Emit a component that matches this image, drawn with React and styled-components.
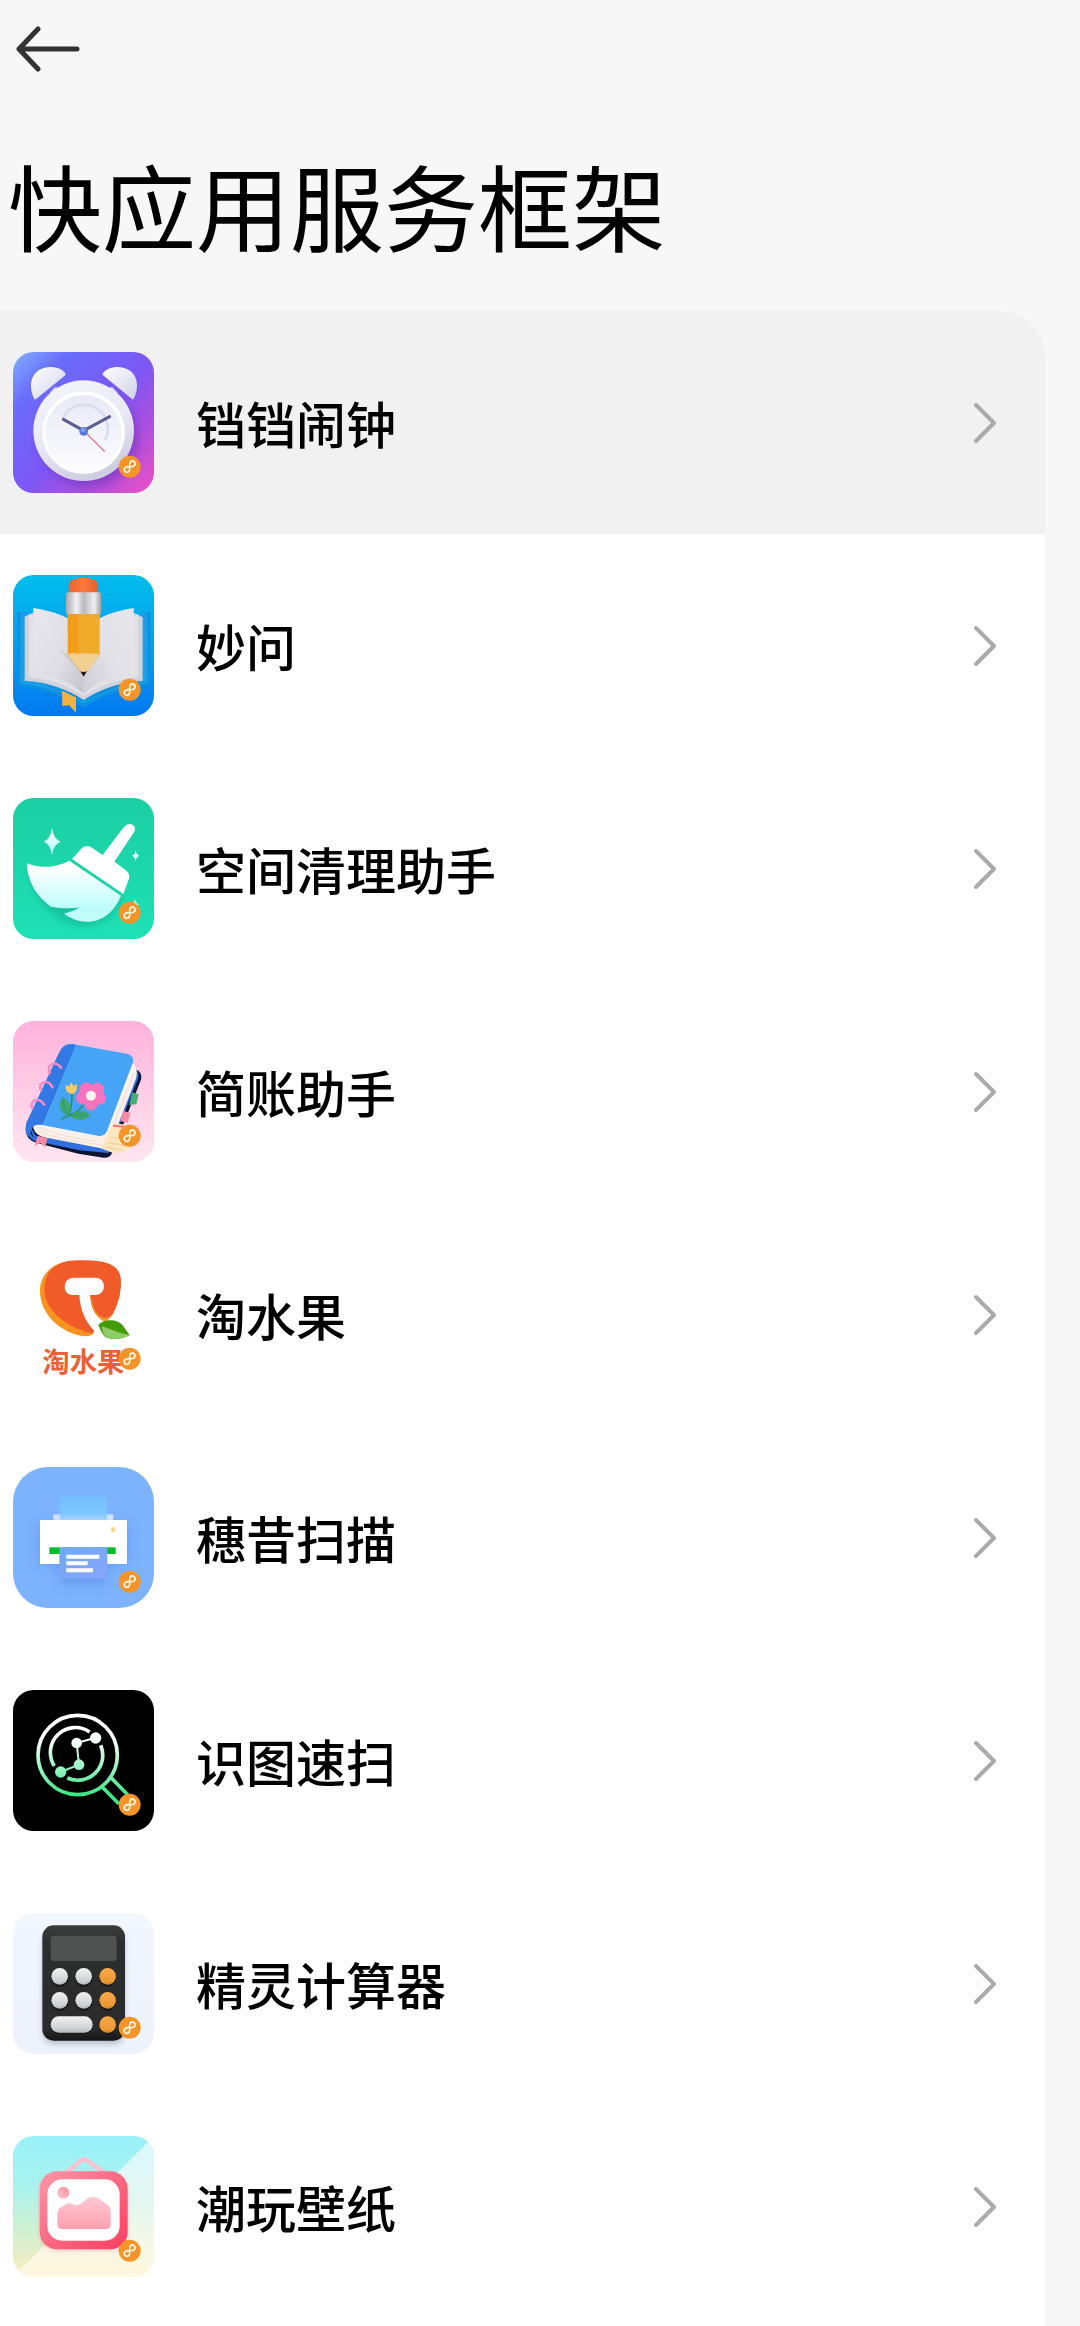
import React from 'react'
import styled, { createGlobalStyle } from 'styled-components';

const GlobalStyle = createGlobalStyle`
  * {
    box-sizing: border-box;
  }
  body {
    margin: 0;
    background: #f7f7f7;
    font-family: "Noto Sans CJK SC", "Noto Sans", sans-serif;
    color: #000;
  }
`

// small orange "quick app" mark in the corner of every icon
const LinkBadge = () => (
    <g transform="translate(350 344)">
        <circle r="33" fill="#f59428" />
        <path
            transform="rotate(-47)"
            d="M0 0C4 -5 7 -8 12 -8A8 8 0 0 1 12 8C7 8 4 5 0 0C-4 -5 -7 -8 -12 -8A8 8 0 0 0 -12 8C-7 8 -4 5 0 0Z"
            fill="none"
            stroke="#fff7ea"
            strokeWidth="5"
        />
    </g>
)

const ClockIcon = () => (
    <>
        <defs>
            <linearGradient id="clock-bg" x1="0" y1="0" x2="1" y2="1">
                <stop offset="0" stopColor="#7fb0ff" />
                <stop offset="0.2" stopColor="#6a6dfb" />
                <stop offset="0.52" stopColor="#7c57f6" />
                <stop offset="0.75" stopColor="#b04fdc" />
                <stop offset="1" stopColor="#ee50c4" />
            </linearGradient>
            <linearGradient id="clock-rim" x1="0" y1="0" x2="0.4" y2="1">
                <stop offset="0" stopColor="#f6f6fd" />
                <stop offset="0.6" stopColor="#e9e9f5" />
                <stop offset="1" stopColor="#cfcfe3" />
            </linearGradient>
            <linearGradient id="clock-face" x1="0" y1="0" x2="0" y2="1">
                <stop offset="0" stopColor="#e8e9f6" />
                <stop offset="1" stopColor="#fdfdff" />
            </linearGradient>
            <linearGradient id="clock-bell" x1="0" y1="0" x2="1" y2="1">
                <stop offset="0" stopColor="#ffffff" />
                <stop offset="1" stopColor="#cfd2ea" />
            </linearGradient>
            <filter id="clock-shadow" x="-20%" y="-20%" width="150%" height="150%">
                <feGaussianBlur stdDeviation="14" />
            </filter>
        </defs>
        <rect width="423" height="423" rx="62" fill="url(#clock-bg)" />
        <g transform="translate(-40 -36)">
            <circle cx="266" cy="292" r="150" fill="#5a2fb8" opacity="0.45" filter="url(#clock-shadow)" />
            <path d="M150 158l16 -18l26 8l-30 26z" fill="#c9cce8" />
            <path d="M354 158l-16 -18l-26 8l30 26z" fill="#c9cce8" />
            <path d="M104 177C88 146 90 108 118 90C146 74 180 80 196 98Q200 103 195 107L112 175Q107 180 104 177Z" fill="url(#clock-bell)" />
            <path d="M402 177C418 146 416 108 388 90C360 74 326 80 311 98Q306 103 312 107L394 175Q399 180 402 177Z" fill="url(#clock-bell)" />
            <circle cx="252" cy="272" r="151" fill="url(#clock-rim)" />
            <circle cx="252" cy="278" r="124" fill="#fff" />
            <circle cx="252" cy="280" r="115" fill="url(#clock-face)" />
            <path d="M190 232A68 68 0 1 1 316 300" fill="none" stroke="#dcdeef" strokeWidth="9" />
            <path d="M252 272L191 238M252 272L330 230" stroke="#5a5e90" strokeWidth="9" strokeLinecap="round" />
            <path d="M256 276L314 334" stroke="#e2778b" strokeWidth="4" strokeLinecap="round" />
            <circle cx="252" cy="274" r="13" fill="#5779dc" />
            <circle cx="250" cy="270" r="6" fill="#86a6f5" />
        </g>
    </>
)

const BookIcon = () => (
    <>
        <defs>
            <linearGradient id="book-bg" x1="0" y1="0" x2="0" y2="1">
                <stop offset="0" stopColor="#00bdec" />
                <stop offset="0.6" stopColor="#0b97ee" />
                <stop offset="1" stopColor="#0078f0" />
            </linearGradient>
            <linearGradient id="book-metal" x1="0" y1="0" x2="1" y2="0">
                <stop offset="0" stopColor="#a9a9ad" />
                <stop offset="0.3" stopColor="#f2f2f4" />
                <stop offset="0.5" stopColor="#b9b9be" />
                <stop offset="0.8" stopColor="#f0f0f2" />
                <stop offset="1" stopColor="#9d9da3" />
            </linearGradient>
            <linearGradient id="book-page" x1="0" y1="0" x2="1" y2="1">
                <stop offset="0" stopColor="#e9e8ee" />
                <stop offset="0.6" stopColor="#dedde5" />
                <stop offset="1" stopColor="#c5c3cd" />
            </linearGradient>
            <linearGradient id="book-page-right" x1="0" y1="1" x2="1" y2="0">
                <stop offset="0" stopColor="#cfcdd6" />
                <stop offset="0.5" stopColor="#e3e2e8" />
                <stop offset="1" stopColor="#e6e6ea" />
            </linearGradient>
            <linearGradient id="book-eraser" x1="0" y1="0" x2="1" y2="0">
                <stop offset="0" stopColor="#f0602c" />
                <stop offset="0.5" stopColor="#fa7a42" />
                <stop offset="1" stopColor="#e9602c" />
            </linearGradient>
        </defs>
        <rect width="423" height="423" rx="62" fill="url(#book-bg)" />
        <g transform="translate(-40 -45)">
            <path d="M52 156H80V340L250 418L428 340V156H452V376C370 384 300 410 252 444C205 410 130 384 55 378Z" fill="#0c90e0" />
            <path d="M62 158H80V352L250 424L424 352V158H444V368C370 378 300 402 252 430C205 402 130 378 60 370Z" fill="#1c9ee6" />
            <path d="M187 392L229 412L229 458L209 436L188 438Z" fill="#f3b142" />
            <path d="M75 170L100 158L252 250L402 158L429 172L429 362C360 366 300 388 252 420C204 388 145 366 75 362Z" fill="#d3d2da" />
            <path d="M88 162L250 250L416 162L416 352C350 358 290 382 252 408C214 382 155 358 88 352Z" fill="#e2e1e8" />
            <path d="M101 144C160 152 220 176 252 206L252 402C215 366 160 344 101 338Z" fill="url(#book-page)" />
            <path d="M402 144C344 152 284 176 252 206L252 402C288 366 344 344 402 338Z" fill="url(#book-page-right)" />
            <path d="M205 284L252 348L180 270Z" fill="#a9a3ae" opacity="0.3" />
            <path d="M207 104L207 76C207 60 222 54 251 54C280 54 295 60 295 76L295 104Z" fill="url(#book-eraser)" />
            <rect x="199" y="97" width="106" height="66" rx="8" fill="url(#book-metal)" />
            <path d="M204 162H300V284L252 348L204 284Z" fill="#f0ab28" />
            <path d="M204 162H236V284H206Z" fill="#f29c1c" />
            <path d="M205 284Q218 274 236 282Q252 276 268 282Q286 276 299 284L252 348Z" fill="#f1cf8e" />
            <path d="M242 334Q252 338 262 334L252 350Z" fill="#221d1c" />
        </g>
    </>
)

const BroomIcon = () => (
    <>
        <defs>
            <linearGradient id="broom-bg" x1="0" y1="0" x2="0" y2="1">
                <stop offset="0" stopColor="#1bcea3" />
                <stop offset="1" stopColor="#1fe0b5" />
            </linearGradient>
            <linearGradient id="broom-brush" x1="0" y1="0" x2="0" y2="1">
                <stop offset="0.1" stopColor="#ffffff" />
                <stop offset="0.8" stopColor="#bcfdfa" />
                <stop offset="1" stopColor="#c5fdf9" />
            </linearGradient>
            <filter id="broom-shadow" x="-20%" y="-20%" width="140%" height="140%">
                <feGaussianBlur stdDeviation="9" />
            </filter>
        </defs>
        <rect width="423" height="423" rx="62" fill="url(#broom-bg)" />
        <g transform="translate(-40 -39)">
            <path d="M81 250C125 262 170 260 210 236L370 340C340 400 300 424 255 424C210 424 110 390 81 250Z" fill="#0f9f80" opacity="0.4" filter="url(#broom-shadow)" />
            <path d="M81 235C125 252 168 248 209 227L364 332C340 390 300 410 262 410C236 410 212 400 193 386Q220 380 241 367C215 372 190 370 153 365C108 332 84 290 81 235Z" fill="url(#broom-brush)" />
            <path d="M217 222L247 189Q261 177 277 188L309 210L372 127Q384 113 398 119Q411 126 403 142L344 230L377 254Q392 265 388 281L371 327Z" fill="#fff" />
            <path d="M157 130Q162 164 183 170Q162 177 157 210Q152 177 132 170Q152 164 157 130Z" fill="url(#broom-brush)" />
            <path d="M408 195Q410 210 419 212Q410 215 408 229Q406 215 397 212Q406 210 408 195Z" fill="#e3fff9" />
            <path d="M405 342Q408 356 419 360L401 362Z" fill="#e3fff9" />
        </g>
    </>
)

const NotebookIcon = () => (
    <>
        <defs>
            <linearGradient id="note-bg" x1="0" y1="0" x2="0" y2="1">
                <stop offset="0" stopColor="#ffb2dc" />
                <stop offset="1" stopColor="#ffe6f0" />
            </linearGradient>
        </defs>
        <rect width="423" height="423" rx="62" fill="url(#note-bg)" />
        <g transform="translate(-40 -36)">
            <path d="M395 178Q430 184 424 212L336 434Q330 447 312 446L236 434L112 402Q78 392 78 362L100 320Z" fill="#0c1633" />
            <path d="M396 174Q420 182 416 206L326 432L240 424L106 396Q70 380 82 334L92 344Q100 380 128 394Z" fill="#2f6fe0" />
            <path d="M92 350Q94 374 104 386L98 382Q88 370 92 350Z" fill="#0c1633" />
            <path d="M100 345L398 163Q416 176 410 206L328 418Q318 424 304 418L130 384Q98 374 100 345Z" fill="#fbf1ea" />
            <path d="M110 352Q180 384 300 398M116 368Q190 394 304 408M404 190L330 378" fill="none" stroke="#f2ddd5" strokeWidth="3" />
            <path d="M340 342L404 350L396 412Q372 438 334 430L304 418Z" fill="#fbe6bd" />
            <path d="M330 385L366 388M324 402L376 408M318 415L366 422" stroke="#f3cf94" strokeWidth="3" />
            <path d="M178 132Q190 102 218 105L382 134Q404 140 400 160L322 366Q314 384 294 380L128 348Q98 342 92 366L84 378Q72 360 84 334Z" fill="#45a4f5" />
            <path d="M178 132Q190 102 224 106L124 347Q98 342 92 370L84 382Q72 360 84 334Z" fill="#3478e6" />
            <path d="M226 107L126 346" stroke="#2f6cd8" strokeWidth="4" />
            <path d="M150 192C138 166 168 152 184 176M124 244C112 222 144 206 158 234M98 298C88 274 118 262 133 286" fill="none" stroke="#f58cc3" strokeWidth="8" strokeLinecap="round" />
            <path d="M398 250L417 256L410 286L388 288Z" fill="#46ad75" />
            <path d="M370 305L393 312L384 342L362 336Z" fill="#f58bab" />
            <path d="M340 350L376 353" stroke="#f0728c" strokeWidth="6" />
            <path d="M114 380L144 388L136 414L122 402L105 410Z" fill="#f789a5" />
            <path d="M217 245Q218 290 208 318L186 330M250 290Q232 312 208 320" fill="none" stroke="#2f8f63" strokeWidth="5" strokeLinecap="round" />
            <path d="M204 320C176 310 174 280 190 264C210 274 218 298 204 320Z" fill="#3fa673" />
            <path d="M212 322C230 302 256 304 272 316C260 338 232 338 212 322Z" fill="#3fa673" />
            <path d="M186 268L202 316M214 321L264 316" stroke="#2f8f63" strokeWidth="2" />
            <path d="M198 228L208 232L215 220L222 231L231 224C234 246 226 255 214 254C202 252 197 244 198 228Z" fill="#f7ca66" />
            <g fill="#f574bd">
                <circle cx="260" cy="240" r="20" />
                <circle cx="293" cy="241" r="20" />
                <circle cx="300" cy="268" r="19" />
                <circle cx="274" cy="284" r="20" />
                <circle cx="249" cy="266" r="20" />
            </g>
            <circle cx="274" cy="260" r="15" fill="#fff6ef" />
        </g>
    </>
)

const FruitIcon = () => (
    <>
        <rect width="423" height="423" rx="62" fill="#fff" />
        <g transform="translate(-40 -45)">
            <path d="M214 96C160 100 124 134 121 180C119 240 160 296 234 318Q262 326 280 316L290 290L200 120Z" fill="#f7941f" />
            <path d="M240 94C190 92 134 110 134 184C136 240 190 284 246 304Q270 316 282 310L300 262Q330 280 346 242C358 214 364 190 364 158C364 112 330 92 240 94Z" fill="#f15a29" />
            <path d="M270 200L275 206C280 240 296 266 318 268Q334 270 346 242Q334 276 310 278Q284 268 270 200Z" fill="#f7941f" />
            <path d="M222 146H288Q312 148 313 172Q312 194 290 198H271C273 232 284 262 312 277L298 296L290 312L284 306C256 276 242 244 239 198H216Q194 194 195 172Q196 148 222 146Z" fill="#fff" />
            <path d="M296 288C310 272 350 266 370 290Q380 304 390 318C370 330 330 336 314 322Q304 310 296 288Z" fill="#429d05" />
            <path d="M306 292C330 298 350 312 390 318C364 332 330 334 316 322Q308 310 306 292Z" fill="#8ccb66" />
        </g>
        <text x="88" y="384" fontSize="82" fontWeight="700" fill="#ee5f35" fontFamily='"Noto Sans CJK SC", sans-serif'>
            淘水果
        </text>
    </>
)

const PrinterIcon = () => (
    <>
        <defs>
            <linearGradient id="print-paper" x1="0" y1="0" x2="0" y2="1">
                <stop offset="0" stopColor="#72bfff" />
                <stop offset="0.7" stopColor="#7cc6ff" />
                <stop offset="1" stopColor="#a8d2fd" />
            </linearGradient>
            <linearGradient id="print-out" x1="0" y1="0" x2="1" y2="1">
                <stop offset="0" stopColor="#70a8f8" />
                <stop offset="1" stopColor="#86a6fa" />
            </linearGradient>
            <filter id="print-shadow" x="-20%" y="-30%" width="140%" height="170%">
                <feGaussianBlur stdDeviation="16" />
            </filter>
        </defs>
        <rect width="423" height="423" rx="104" fill="#7db2fd" />
        <g transform="translate(-40 -39)">
            <rect x="118" y="210" width="268" height="120" fill="#4a86e6" opacity="0.5" filter="url(#print-shadow)" />
            <rect x="180" y="300" width="142" height="90" fill="#4a86e6" opacity="0.5" filter="url(#print-shadow)" />
            <rect x="161" y="181" width="180" height="20" fill="#cfdffc" />
            <rect x="180" y="128" width="142" height="70" fill="url(#print-paper)" />
            <rect x="121" y="198" width="261" height="132" fill="#fff" />
            <rect x="149" y="280" width="199" height="20" fill="#06bd27" />
            <rect x="334" y="220" width="13" height="13" rx="4" fill="#f7d48c" />
            <rect x="179" y="280" width="144" height="95" fill="url(#print-out)" />
            <path d="M200 308H299M200 328H264M200 349H280" stroke="#fff" strokeWidth="12" />
        </g>
    </>
)

const ScanIcon = () => (
    <>
        <defs>
            <linearGradient id="scan-line" gradientUnits="userSpaceOnUse" x1="0" y1="105" x2="0" y2="350">
                <stop offset="0.3" stopColor="#ffffff" />
                <stop offset="0.65" stopColor="#9af5c4" />
                <stop offset="1" stopColor="#3de583" />
            </linearGradient>
        </defs>
        <rect width="423" height="423" rx="62" fill="#000" />
        <g transform="translate(-40 -34)" fill="none" stroke="url(#scan-line)">
            <circle cx="234" cy="229" r="119" strokeWidth="11" />
            <path d="M270 160A75 75 0 0 0 164 262M303 200A75 75 0 0 1 203 298" strokeWidth="11" />
            <path d="M183 280L238 258L231 193L288 177" strokeWidth="6" />
            <g fill="url(#scan-line)" stroke="none">
                <circle cx="288" cy="178" r="17" />
                <circle cx="231" cy="193" r="16" />
                <circle cx="238" cy="258" r="16" />
                <circle cx="183" cy="280" r="17" />
            </g>
            <path d="M307 324L358 376M335 298L384 348" strokeWidth="11" />
        </g>
    </>
)

const CalculatorIcon = () => (
    <>
        <defs>
            <linearGradient id="calc-bg" x1="0" y1="0" x2="0" y2="1">
                <stop offset="0" stopColor="#f1f7ff" />
                <stop offset="1" stopColor="#eef3fb" />
            </linearGradient>
            <linearGradient id="calc-body" x1="0" y1="0" x2="0" y2="1">
                <stop offset="0" stopColor="#3b3c3c" />
                <stop offset="0.15" stopColor="#2d2e2e" />
                <stop offset="0.9" stopColor="#2b2b2b" />
                <stop offset="1" stopColor="#151515" />
            </linearGradient>
            <linearGradient id="calc-key" x1="0" y1="0" x2="0" y2="1">
                <stop offset="0" stopColor="#f2f2f2" />
                <stop offset="0.7" stopColor="#d2d3d4" />
                <stop offset="1" stopColor="#b6b7b8" />
            </linearGradient>
            <linearGradient id="calc-op" x1="0" y1="0" x2="0" y2="1">
                <stop offset="0" stopColor="#f8ab49" />
                <stop offset="0.8" stopColor="#eb9735" />
                <stop offset="1" stopColor="#cf7f22" />
            </linearGradient>
            <filter id="calc-shadow" x="-20%" y="-20%" width="140%" height="140%">
                <feGaussianBlur stdDeviation="9" />
            </filter>
        </defs>
        <rect width="423" height="423" rx="62" fill="url(#calc-bg)" />
        <g transform="translate(-40 -45)">
            <rect x="130" y="100" width="244" height="338" rx="34" fill="#8b95a5" opacity="0.6" filter="url(#calc-shadow)" />
            <rect x="128" y="82" width="248" height="346" rx="34" fill="url(#calc-body)" />
            <rect x="153" y="113" width="198" height="76" rx="12" fill="#505151" />
            {[237, 309].map((y) => (
                <g key={y}>
                    <circle cx="180" cy={y + 3} r="27" fill="#1a1a1a" />
                    <circle cx="252" cy={y + 3} r="27" fill="#1a1a1a" />
                    <circle cx="180" cy={y - 2} r="25" fill="url(#calc-key)" />
                    <circle cx="252" cy={y - 2} r="25" fill="url(#calc-key)" />
                </g>
            ))}
            {[235, 307, 380].map((y) => (
                <g key={y}>
                    <circle cx="324" cy={y + 5} r="26" fill="#1a1a1a" />
                    <circle cx="324" cy={y} r="25" fill="url(#calc-op)" />
                </g>
            ))}
            <rect x="152" y="359" width="128" height="50" rx="25" fill="#1a1a1a" />
            <rect x="153" y="355" width="126" height="49" rx="24" fill="url(#calc-key)" />
        </g>
    </>
)

const WallpaperIcon = () => (
    <>
        <defs>
            <linearGradient id="wall-bg" x1="0" y1="0" x2="0" y2="1">
                <stop offset="0" stopColor="#98f2fa" />
                <stop offset="0.35" stopColor="#a9f2ee" />
                <stop offset="0.7" stopColor="#d3f0cf" />
                <stop offset="1" stopColor="#fdecc0" />
            </linearGradient>
            <linearGradient id="wall-light" x1="0" y1="0" x2="0" y2="1">
                <stop offset="0" stopColor="#daf8ff" />
                <stop offset="0.5" stopColor="#e4f7f0" />
                <stop offset="0.8" stopColor="#f8f8e4" />
                <stop offset="1" stopColor="#fff7de" />
            </linearGradient>
            <linearGradient id="wall-frame" x1="0" y1="0" x2="1" y2="1">
                <stop offset="0" stopColor="#ff95a6" />
                <stop offset="1" stopColor="#fc3d60" />
            </linearGradient>
            <linearGradient id="wall-hill" x1="0" y1="0" x2="0" y2="1">
                <stop offset="0" stopColor="#ffc9d3" />
                <stop offset="1" stopColor="#fd9fb0" />
            </linearGradient>
            <linearGradient id="wall-sun" x1="1" y1="0" x2="0" y2="1">
                <stop offset="0" stopColor="#fb8ea3" />
                <stop offset="1" stopColor="#ffc6d0" />
            </linearGradient>
            <clipPath id="wall-clip">
                <rect width="423" height="423" rx="62" />
            </clipPath>
            <filter id="wall-shadow" x="-20%" y="-20%" width="140%" height="140%">
                <feGaussianBlur stdDeviation="6" />
            </filter>
        </defs>
        <rect width="423" height="423" rx="62" fill="url(#wall-bg)" />
        <path d="M423 0V423H0Z" fill="url(#wall-light)" clipPath="url(#wall-clip)" />
        <g transform="translate(-40 -39)">
            <path d="M202 146L245 112Q253 106 261 112L310 146" fill="none" stroke="#fbc1ce" strokeWidth="13" />
            <rect x="120" y="152" width="264" height="230" rx="52" fill="#f79aa8" opacity="0.6" filter="url(#wall-shadow)" />
            <rect x="120" y="145" width="264" height="234" rx="52" fill="url(#wall-frame)" />
            <rect x="143" y="169" width="217" height="184" rx="44" fill="#fff" />
            <circle cx="191" cy="209" r="18" fill="url(#wall-sun)" />
            <path d="M173 270Q173 262 180 256L200 243Q208 238 218 244Q234 252 246 240L264 226Q280 216 296 226L324 246Q333 252 333 264V304Q333 318 319 318H187Q173 318 173 304Z" fill="url(#wall-hill)" />
        </g>
    </>
)

const apps = [
    { name: "铛铛闹钟", Icon: ClockIcon, active: true },
    { name: "妙问", Icon: BookIcon },
    { name: "空间清理助手", Icon: BroomIcon },
    { name: "简账助手", Icon: NotebookIcon },
    { name: "淘水果", Icon: FruitIcon },
    { name: "穗昔扫描", Icon: PrinterIcon },
    { name: "识图速扫", Icon: ScanIcon },
    { name: "精灵计算器", Icon: CalculatorIcon },
    { name: "潮玩壁纸", Icon: WallpaperIcon },
]

function AppRow({ name, Icon, active }) {
    return (
        <li>
            <Row type="button" $active={active}>
                <AppIcon viewBox="0 0 423 423" aria-hidden="true">
                    <Icon />
                    <LinkBadge />
                </AppIcon>
                <Name>{name}</Name>
                <Chevron viewBox="0 0 24 42" aria-hidden="true">
                    <path d="M3 3L21 21L3 39" />
                </Chevron>
            </Row>
        </li>
    )
}

export default function App() {
    return (
        <Page>
            <GlobalStyle />
            <Header>
                <BackButton type="button" aria-label="返回">
                    <svg viewBox="0 0 64 46" aria-hidden="true">
                        <path d="M22 3L3 23L22 43M3 23H61" />
                    </svg>
                </BackButton>
                <Title>快应用服务框架</Title>
            </Header>
            <List>
                {apps.map((app) => (
                    <AppRow key={app.name} {...app} />
                ))}
            </List>
        </Page>
    )
}

const Page = styled.div`
  display: flex;
  flex-direction: column;
  min-height: 100vh;
`

const Header = styled.header`
  display: flex;
  flex-direction: column;
  align-items: flex-start;
  gap: 76px;
  padding: 26px 8px 51px;
`

const BackButton = styled.button`
  display: flex;
  margin: 0 8px;
  padding: 0;
  border: 0;
  background: none;
  cursor: pointer;
  svg {
    width: 64px;
    height: 46px;
    fill: none;
    stroke: #333;
    stroke-width: 5;
    stroke-linecap: round;
    stroke-linejoin: round;
  }
`

const Title = styled.h1`
  margin: 0;
  font-size: 94px;
  line-height: 112px;
  font-weight: 400;
`

const List = styled.ul`
  flex: 1;
  margin: 0 35px 0 0;
  padding: 0;
  list-style: none;
  background: #fff;
  border-top-right-radius: 44px;
  overflow: hidden;
`

const Row = styled.button`
  display: flex;
  align-items: center;
  gap: 42px;
  width: 100%;
  padding: 41px 48px 41px 13px;
  border: 0;
  background: ${({ $active }) => ($active ? "#f1f1f1" : "none")};
  color: inherit;
  font-family: inherit;
  text-align: left;
  cursor: pointer;
`

const AppIcon = styled.svg`
  flex: none;
  width: 141px;
  height: 141px;
`

const Name = styled.span`
  flex: 1;
  padding-bottom: 2px;
  font-size: 50px;
  line-height: 72px;
  font-weight: 500;
`

const Chevron = styled.svg`
  flex: none;
  width: 24px;
  height: 42px;
  fill: none;
  stroke: #aaa;
  stroke-width: 4;
  stroke-linecap: round;
  stroke-linejoin: round;
`
